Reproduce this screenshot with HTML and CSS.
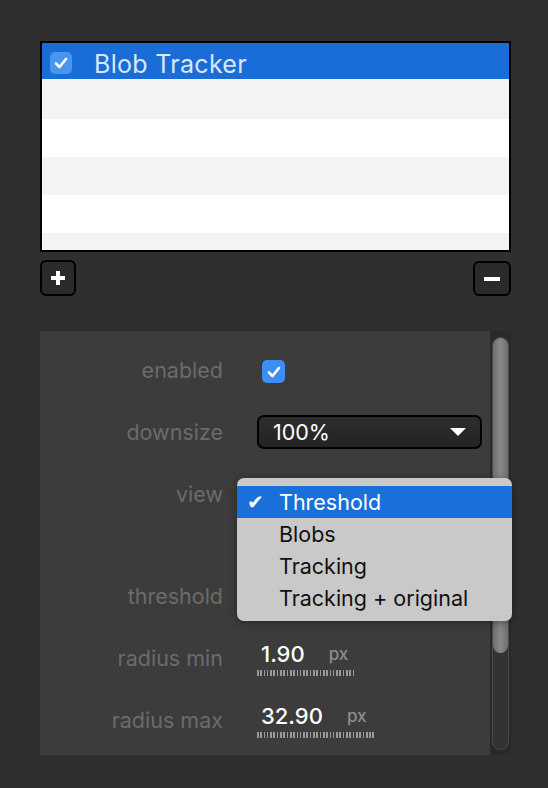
FILE: index.html
```html
<!DOCTYPE html>
<html lang="en">
<head>
    <meta charset="UTF-8">
    <title>Blob Tracker</title>
    <link rel="stylesheet" href="styles.css">
</head>
<body>
    <div class="container">
        <div class="list">
            <div class="row selected">
                <span class="check">
                    <svg viewBox="0 0 22 22" width="22" height="22"><path d="M6 11.5 L9.5 15 L16 7" fill="none" stroke="#fff" stroke-width="2.6" stroke-linecap="round" stroke-linejoin="round"/></svg>
                </span>
                <span class="name">Blob Tracker</span>
            </div>
            <div class="row"></div>
            <div class="row"></div>
            <div class="row"></div>
            <div class="row"></div>
            <div class="row"></div>
        </div>

        <div class="list-buttons">
            <button class="btn btn-add">
                <svg viewBox="0 0 20 20" width="20" height="20"><path d="M10 3 V17 M3 10 H17" stroke="#fff" stroke-width="4"/></svg>
            </button>
            <button class="btn btn-remove">
                <svg viewBox="0 0 20 20" width="20" height="20"><path d="M2 10 H18" stroke="#fff" stroke-width="4"/></svg>
            </button>
        </div>

        <div class="panel">
            <div class="fields">
                <div class="field">
                    <label>enabled</label>
                    <span class="check check-lg">
                        <svg viewBox="0 0 22 22" width="22" height="22"><path d="M6 11.5 L9.5 15 L16 7" fill="none" stroke="#fff" stroke-width="2.6" stroke-linecap="round" stroke-linejoin="round"/></svg>
                    </span>
                </div>
                <div class="field">
                    <label>downsize</label>
                    <div class="select">
                        <span>100%</span>
                        <svg viewBox="0 0 16 10" width="16" height="10"><path d="M0 1 H16 L8 9 Z" fill="#fff"/></svg>
                    </div>
                </div>
                <div class="field field-view">
                    <label>view</label>
                    <div></div>
                </div>
                <div class="field">
                    <label>threshold</label>
                    <div></div>
                </div>
                <div class="field">
                    <label>radius min</label>
                    <div class="number">
                        <span class="value">1.90</span>
                        <span class="unit">px</span>
                    </div>
                </div>
                <div class="field">
                    <label>radius max</label>
                    <div class="number">
                        <span class="value">32.90</span>
                        <span class="unit">px</span>
                    </div>
                </div>
            </div>

            <div class="scrollbar">
                <div class="track">
                    <div class="thumb"></div>
                </div>
            </div>

            <ul class="menu">
                <li class="active"><span class="tick">&#10004;</span>Threshold</li>
                <li><span class="tick"></span>Blobs</li>
                <li><span class="tick"></span>Tracking</li>
                <li><span class="tick"></span>Tracking + original</li>
            </ul>
        </div>
    </div>
</body>
</html>
```

FILE: styles.css
```css
* {
    margin: 0;
    padding: 0;
    box-sizing: border-box;
}

body {
    font-family: 'Inter', 'Liberation Sans', sans-serif;
    background-color: #2f2f2f;
    color: #fff;
}

.container {
    width: 471px;
    margin-left: 40px;
    padding-top: 41px;
}

/* list of trackers */

.list {
    height: 211px;
    border: 2px solid #000;
    background: #fff;
    overflow: hidden;
}

.row {
    height: 38px;
    display: flex;
    align-items: center;
}

.row:nth-child(even) {
    background: #f3f3f3;
}

.row.selected {
    height: 36px;
    background: #1a6dd6;
}

.row:nth-child(2) {
    height: 40px;
}

.check {
    width: 22px;
    height: 22px;
    border-radius: 5px;
    background: #4a95ee;
    display: flex;
    align-items: center;
    justify-content: center;
    margin-left: 8px;
    margin-top: 3px;
}

.name {
    margin-left: 22px;
    margin-top: 5px;
    font-size: 25px;
    color: #d8e7fb;
    letter-spacing: 0.3px;
}

.list-buttons {
    display: flex;
    justify-content: space-between;
    margin-top: 8px;
}

.btn {
    width: 36px;
    height: 36px;
    background: #2a2a2a;
    border: 2px solid #000;
    border-radius: 6px;
    display: flex;
    align-items: center;
    justify-content: center;
}

.btn-remove {
    width: 38px;
    height: 35px;
    margin-top: 1px;
}

/* settings panel */

.panel {
    position: relative;
    margin-top: 35px;
    height: 424px;
    background: #3c3c3c;
    display: flex;
}

.fields {
    flex: 1;
    padding-top: 8px;
}

.field {
    height: 62px;
    display: grid;
    grid-template-columns: 183px auto;
    column-gap: 34px;
    align-items: center;
}

.field-view {
    margin-bottom: 40px;
}

.field label {
    text-align: right;
    font-size: 21.5px;
    color: #6b6b6b;
}

.check-lg {
    width: 23px;
    height: 23px;
    margin: 3px 0 0 5px;
    background: #3d8ef3;
}

.select {
    width: 225px;
    height: 34px;
    border: 2px solid #000;
    border-radius: 7px;
    background: linear-gradient(#2e2e2e, #232323);
    display: flex;
    align-items: center;
    justify-content: space-between;
    padding: 0 14px 0 14px;
    font-size: 21.5px;
    color: #fff;
}

.number {
    justify-self: start;
    display: flex;
    align-items: flex-start;
    padding: 0 8px 8px 4px;
    margin-top: 0;
    background: repeating-linear-gradient(90deg, #9a9a9a 0 1.6px, transparent 1.6px 3.3px) left bottom / 100% 6px no-repeat;
}

.number .value {
    font-size: 22px;
    font-weight: 500;
    line-height: 28px;
    color: #fff;
}

.number .unit {
    font-size: 17px;
    font-weight: 500;
    line-height: 22px;
    margin-top: 3px;
    color: #8c8c8c;
    margin-left: 24px;
}

/* scrollbar */

.scrollbar {
    width: 21px;
    background: #2a2a2a;
    padding: 6px 2px 5px 2px;
}

.track {
    height: 100%;
    border-radius: 9px;
    background: #333;
    border: 1px solid #4a4a4a;
    position: relative;
}

.thumb {
    height: 315px;
    border-radius: 9px;
    background: linear-gradient(90deg, #6e6e6e, #888 50%, #6e6e6e);
}

/* popup menu */

.menu {
    position: absolute;
    left: 197px;
    top: 147px;
    width: 275px;
    height: 143px;
    background: #c9c9c9;
    border-radius: 7px;
    list-style: none;
    padding-top: 8px;
    box-shadow: 0 2px 8px rgba(0, 0, 0, 0.35);
}

.menu li {
    height: 32px;
    display: flex;
    align-items: center;
    font-size: 21.5px;
    color: #111;
}

.menu li.active {
    background: #1a6fd8;
    color: #fff;
}

.tick {
    width: 42px;
    padding-left: 10px;
    font-size: 20px;
}
```
